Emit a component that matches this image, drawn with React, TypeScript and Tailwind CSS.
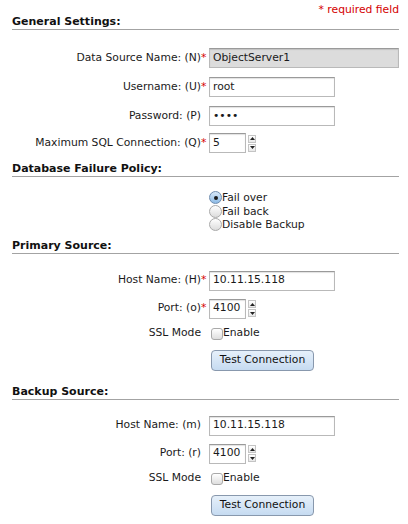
import React from "react";

const font = { fontFamily: '"DejaVu Sans", Verdana, sans-serif' };

const Req = () => <span className="inline-block w-[8px] text-left text-[#d40000]">*</span>;
const NoReq = () => <span className="inline-block w-[8px]" />;

const Heading = ({ title, className }: { title: string; className: string }) => (
  <div className={"h-[15px] border-b border-[#a3a3a3] font-bold text-[11px] leading-[14px] text-[#111] " + className}>
    {title}
  </div>
);

const Row = ({ label, req, className, children }: { label: string; req?: boolean; className: string; children: React.ReactNode }) => (
  <div className={"flex h-[20px] items-center " + className}>
    <div className="w-[189px] text-right whitespace-nowrap">{label}</div>
    {req ? <Req /> : <NoReq />}
    {children}
  </div>
);

const TextBox = ({ value, width, gray }: { value: string; width: string; gray?: boolean }) => (
  <div
    className={
      "flex h-[20px] items-center border border-[#b9b9b9] border-t-[#9a9a9a] pl-[3px] shadow-[inset_0_1px_1px_rgba(0,0,0,0.12)] " +
      width +
      (gray ? " bg-[#dcdcdc]" : " bg-white")
    }
  >
    {value}
  </div>
);

const Arrow = ({ up }: { up?: boolean }) => (
  <div className="flex h-[8px] w-[8px] items-center justify-center border border-[#c4c4c4] bg-linear-to-b from-white to-[#e8e8e8]">
    <svg width="5" height="3" viewBox="0 0 5 3">
      {up ? <polygon points="2.5,0 5,3 0,3" fill="#222" /> : <polygon points="0,0 5,0 2.5,3" fill="#222" />}
    </svg>
  </div>
);

const Spinner = ({ value }: { value: string }) => (
  <div className="flex items-center">
    <TextBox value={value} width="w-[37px]" />
    <div className="ml-[2px] flex flex-col gap-[1px]">
      <Arrow up />
      <Arrow />
    </div>
  </div>
);

const Radio = ({ label, checked }: { label: string; checked?: boolean }) => (
  <div className="flex h-[13.5px] items-center">
    <span
      className={
        "flex h-[13px] w-[13px] items-center justify-center rounded-full border " +
        (checked
          ? "border-[#6f8db0] bg-linear-to-b from-[#d7e8f8] to-[#8dbbe6]"
          : "border-[#a9a9a9] bg-linear-to-b from-white to-[#dcdcdc]")
      }
    >
      {checked && <span className="h-[4px] w-[4px] rounded-full bg-[#1a1a1a]" />}
    </span>
    <span>{label}</span>
  </div>
);

const Check = () => (
  <div className="ml-[2px] flex items-center">
    <span className="h-[12px] w-[12px] rounded-[3px] border border-[#a9a9a9] bg-linear-to-b from-white to-[#dedede]" />
    <span>Enable</span>
  </div>
);

const TestButton = ({ className }: { className: string }) => (
  <div className={"flex " + className}>
    <div className="ml-[199px] flex h-[21px] w-[103px] items-center justify-center rounded-[4px] border border-[#8898ad] bg-linear-to-b from-[#e6f0fa] to-[#c6dbf1] text-[#111]">
      Test Connection
    </div>
  </div>
);

export default function App() {
  return (
    <div style={font} className="h-[524px] w-[408px] bg-white pl-[12px] pr-[9px] text-[10.75px] text-[#1a1a1a]">
      <div className="pt-[2px] text-right leading-[16px] text-[#d40000]">* required field</div>
      <Heading title="General Settings:" className="mt-[-3px]" />

      <Row label="Data Source Name: (N)" req className="mt-[18px]">
        <TextBox value="ObjectServer1" width="w-[190px]" gray />
      </Row>
      <Row label="Username: (U)" req className="mt-[9px]">
        <TextBox value="root" width="w-[126px]" />
      </Row>
      <Row label="Password: (P)" className="mt-[9px]">
        <TextBox value="••••" width="w-[126px]" />
      </Row>
      <Row label="Maximum SQL Connection: (Q)" req className="mt-[7px]">
        <Spinner value="5" />
      </Row>

      <Heading title="Database Failure Policy:" className="mt-[9px]" />
      <div className="mt-[14px] flex flex-col pl-[197px] leading-[13px]">
        <Radio label="Fail over" checked />
        <Radio label="Fail back" />
        <Radio label="Disable Backup" />
      </div>

      <Heading title="Primary Source:" className="mt-[7px]" />
      <Row label="Host Name: (H)" req className="mt-[17px]">
        <TextBox value="10.11.15.118" width="w-[126px]" />
      </Row>
      <Row label="Port: (o)" req className="mt-[8px]">
        <Spinner value="4100" />
      </Row>
      <Row label="SSL Mode" className="mt-[5px]">
        <Check />
      </Row>
      <TestButton className="mt-[6px]" />

      <Heading title="Backup Source:" className="mt-[14px]" />
      <Row label="Host Name: (m)" className="mt-[16px]">
        <TextBox value="10.11.15.118" width="w-[126px]" />
      </Row>
      <Row label="Port: (r)" className="mt-[8px]">
        <Spinner value="4100" />
      </Row>
      <Row label="SSL Mode" className="mt-[5px]">
        <Check />
      </Row>
      <TestButton className="mt-[6px]" />
    </div>
  );
}
